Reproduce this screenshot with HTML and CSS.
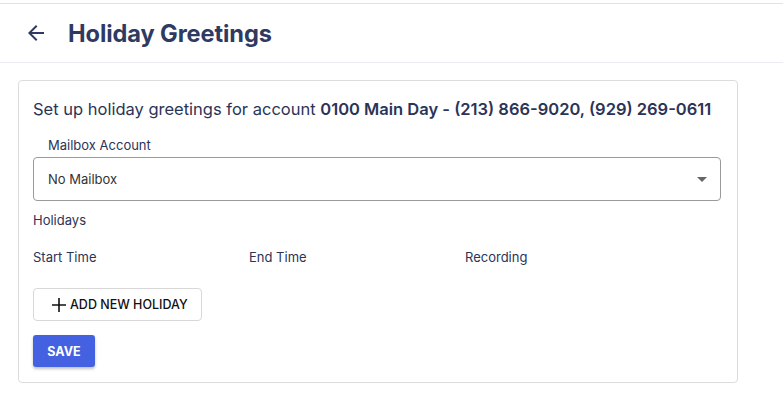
FILE: index.html
```html
<!DOCTYPE html>
<html>
<head>
  <title>Holiday Greetings</title>
  <link rel="stylesheet" href="styles.css">
</head>
<body>

  <div class="topbar">
    <span class="back">
      <svg width="24" height="24" viewBox="0 0 24 24"><path d="M20 11H7.83l5.59-5.59L12 4l-8 8 8 8 1.41-1.41L7.83 13H20v-2z" fill="#2f3a62"/></svg>
    </span>
    <h1>Holiday Greetings</h1>
  </div>

  <div class="card">
    <p class="intro">Set up holiday greetings for account <b>0100 Main Day - (213) 866-9020, (929) 269-0611</b></p>

    <div class="field">
      <label>Mailbox Account</label>
      <div class="select">
        <span>No Mailbox</span>
        <span class="caret"></span>
      </div>
    </div>

    <div class="holidays">Holidays</div>

    <div class="cols">
      <span>Start Time</span>
      <span>End Time</span>
      <span>Recording</span>
    </div>

    <button class="btn-add">
      <svg width="14" height="14" viewBox="0 0 14 14"><path d="M7 0v14M0 7h14" stroke="#111" stroke-width="1.6"/></svg>
      ADD NEW HOLIDAY
    </button>
    <div>
      <button class="btn-save">SAVE</button>
    </div>
  </div>

</body>
</html>
```

FILE: styles.css
```css
body {
  font-family: Inter, "Noto Sans", sans-serif;
  color: #2b3457;
  background: #fff;
  margin: 0;
  padding-top: 3px;
}
.topbar {
  display: flex;
  align-items: center;
  height: 58px;
  border-top: 1px solid #e2e2e6;
  border-bottom: 1px solid #ececf4;
  padding-left: 24px;
}
.back {
  display: flex;
  width: 24px;
  height: 24px;
  margin-right: 20px;
}
h1 {
  margin: 0;
  font-size: 23.6px;
  font-weight: 700;
  color: #2f3a62;
  letter-spacing: -0.1px;
}
.card {
  margin: 17px 0 0 18px;
  width: 689px;
  border: 1px solid #dcdcdc;
  border-radius: 4px;
  padding: 17px 15px 15px 14px;
}
.intro {
  margin: 0;
  font-size: 16.5px;
  line-height: 22px;
}
.intro b {
  font-weight: 600;
}
.field {
  margin-top: 17px;
  margin-right: 1px;
}
.field label {
  display: block;
  font-size: 13px;
  padding-left: 15px;
  line-height: 16px;
  margin-bottom: 4px;
}
.select {
  display: flex;
  align-items: center;
  justify-content: space-between;
  height: 42px;
  border: 1px solid #9a9a9a;
  border-radius: 4px;
  padding: 0 13px 0 14px;
  font-size: 13px;
  color: #333;
}
.caret {
  width: 0;
  height: 0;
  border-left: 5px solid transparent;
  border-right: 5px solid transparent;
  border-top: 5px solid #666;
}
.holidays {
  font-size: 13px;
  margin-top: 11px;
  line-height: 16px;
}
.cols {
  display: grid;
  grid-template-columns: 216px 216px 1fr;
  font-size: 13px;
  margin-top: 21px;
  line-height: 16px;
}
.btn-add {
  display: flex;
  align-items: center;
  gap: 4px;
  margin-top: 23px;
  height: 33px;
  width: 169px;
  padding: 0 0 0 18px;
  background: #fff;
  border: 1px solid #d8d8d8;
  border-radius: 4px;
  font-family: inherit;
  font-size: 12.5px;
  font-weight: 500;
  color: #111;
}
.btn-save {
  margin-top: 14px;
  height: 32px;
  width: 62px;
  padding: 0;
  border: none;
  border-radius: 3px;
  background: #4361e0;
  color: #fff;
  font-family: inherit;
  font-size: 12.5px;
  font-weight: 700;
  box-shadow: 0 2px 3px rgba(0,0,0,0.25);
}
```
